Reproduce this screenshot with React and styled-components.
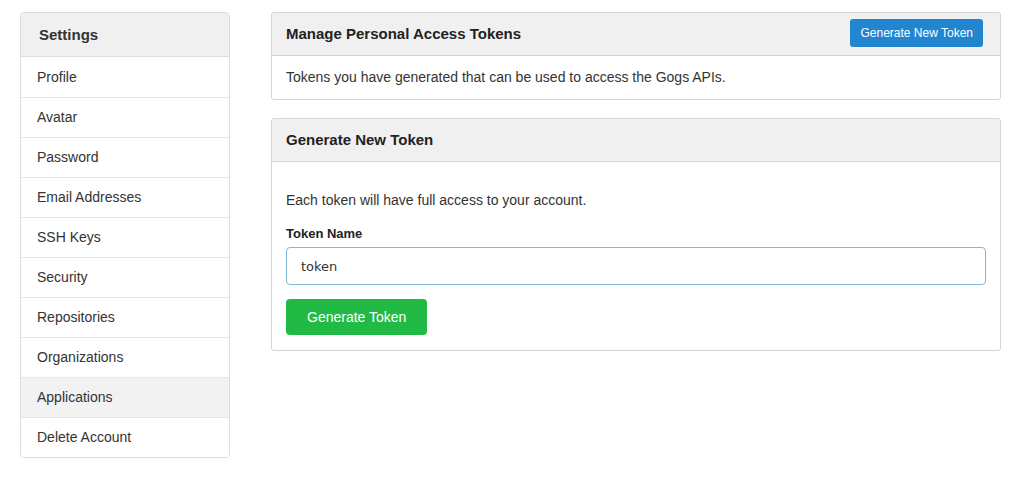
import styled, { createGlobalStyle } from "styled-components";

const GlobalStyle = createGlobalStyle`
    * {
        box-sizing: border-box;
    }

    body {
        margin: 0;
        background: #fff;
        font-family: "Liberation Sans", Arial, sans-serif;
        color: #333;
    }
`;

const menuItems = [
    'Profile',
    'Avatar',
    'Password',
    'Email Addresses',
    'SSH Keys',
    'Security',
    'Repositories',
    'Organizations',
    'Applications',
    'Delete Account'
];

export default function App() {
    const active = 'Applications';

    return (
        <Page>
            <GlobalStyle />
            <Sidebar>
                <SidebarHeader>Settings</SidebarHeader>
                {menuItems.map((item) => (
                    <MenuItem key={item} $active={item === active}>{item}</MenuItem>
                ))}
            </Sidebar>

            <Main>
                <Panel>
                    <PanelHeader>
                        <span>Manage Personal Access Tokens</span>
                        <SmallButton>Generate New Token</SmallButton>
                    </PanelHeader>
                    <PanelBody>
                        Tokens you have generated that can be used to access the Gogs APIs.
                    </PanelBody>
                </Panel>

                <Panel>
                    <PanelHeader>
                        <span>Generate New Token</span>
                    </PanelHeader>
                    <Form onSubmit={(e) => e.preventDefault()}>
                        <p>Each token will have full access to your account.</p>
                        <Label htmlFor="token-name">Token Name</Label>
                        <Input id="token-name" type="text" defaultValue="token" />
                        <GreenButton type="submit">Generate Token</GreenButton>
                    </Form>
                </Panel>
            </Main>
        </Page>
    );
}

const Page = styled.div`
    display: flex;
    align-items: flex-start;
    gap: 41px;
    padding: 12px 18px 20px 20px;
`;

const Sidebar = styled.nav`
    width: 210px;
    flex-shrink: 0;
    border: 1px solid #ddd;
    border-radius: 4px;
    overflow: hidden;
`;

const SidebarHeader = styled.div`
    height: 44px;
    display: flex;
    align-items: center;
    padding: 0 0 1px 18px;
    background: #f0f0f0;
    border-bottom: 1px solid #ddd;
    font-size: 15px;
    font-weight: 700;
    color: #333;
`;

const MenuItem = styled.div`
    height: 40px;
    display: flex;
    align-items: center;
    padding: 0 0 1px 16px;
    font-size: 14px;
    color: #333;
    background: ${(p) => (p.$active ? '#f2f2f2' : '#fff')};

    & + & {
        border-top: 1px solid #e6e6e6;
    }
`;

const Main = styled.main`
    flex: 1;
    display: flex;
    flex-direction: column;
    gap: 18px;
`;

const Panel = styled.section`
    border: 1px solid #d4d4d5;
    border-radius: 3px;
    overflow: hidden;
`;

const PanelHeader = styled.div`
    height: 43px;
    display: flex;
    align-items: center;
    justify-content: space-between;
    padding: 0 17px 2px 14px;
    background: #f0f0f0;
    border-bottom: 1px solid #d4d4d5;
    font-size: 15px;
    font-weight: 700;
    color: #222;
`;

const SmallButton = styled.button`
    height: 28px;
    padding: 0 10px;
    border: none;
    border-radius: 3px;
    background: #2185d0;
    color: #fff;
    font-family: inherit;
    font-size: 12px;
    cursor: pointer;
`;

const PanelBody = styled.div`
    height: 43px;
    display: flex;
    align-items: center;
    padding: 0 14px 1px;
    font-size: 14px;
    color: #333;
`;

const Form = styled.form`
    display: flex;
    flex-direction: column;
    align-items: flex-start;
    padding: 29px 14px 15px;

    p {
        margin: 0 0 17px;
        font-size: 14px;
        line-height: 18px;
        color: #333;
    }
`;

const Label = styled.label`
    font-size: 13px;
    font-weight: 700;
    color: #222;
    margin-bottom: 6px;
`;

const Input = styled.input`
    width: 100%;
    height: 38px;
    padding: 0 14px;
    border: 1px solid #85b7d9;
    border-radius: 4px;
    font-family: "DejaVu Sans", sans-serif;
    font-size: 13px;
    color: #333;
    outline: none;
    margin-bottom: 14px;
`;

const GreenButton = styled.button`
    height: 36px;
    padding: 0 21px;
    border: none;
    border-radius: 4px;
    background: #21ba45;
    color: #fff;
    font-family: inherit;
    font-size: 14px;
    cursor: pointer;
`;
